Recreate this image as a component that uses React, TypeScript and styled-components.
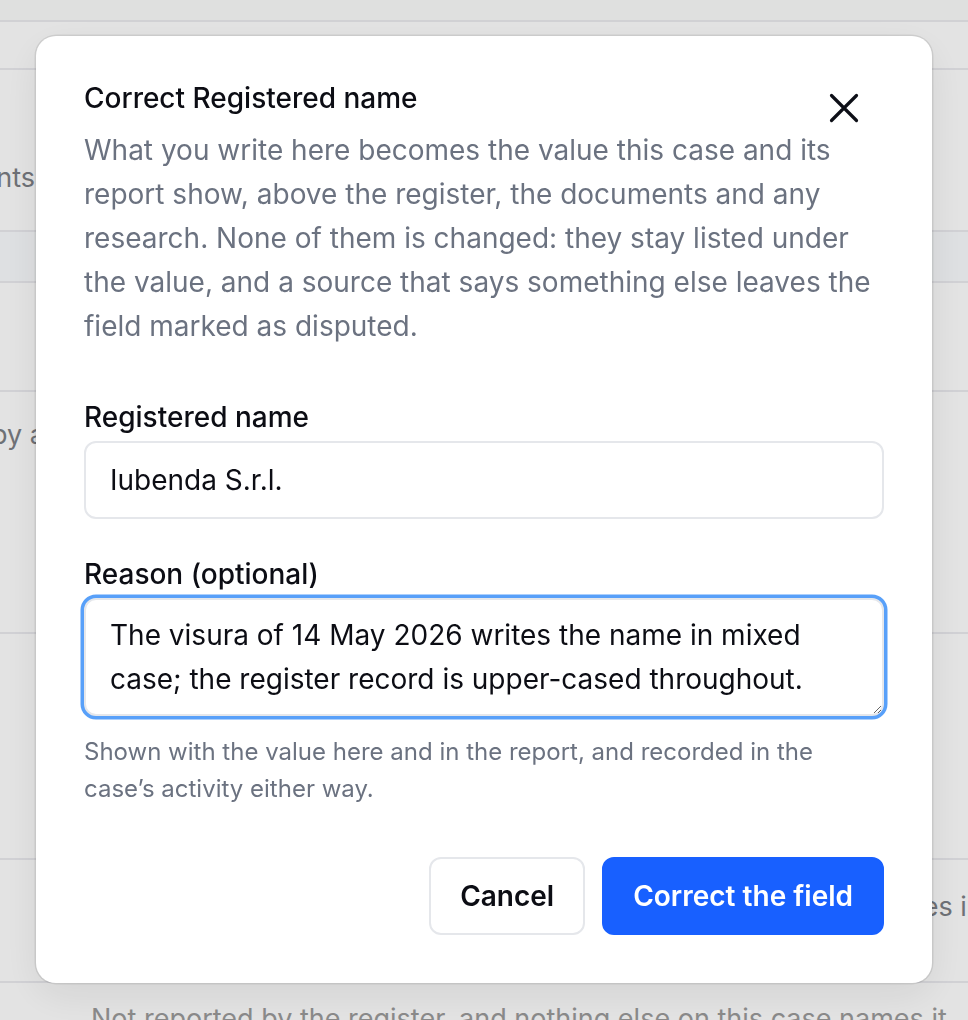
import React from "react";
import styled, { createGlobalStyle } from "styled-components";

const Global = createGlobalStyle`
  html, body { margin: 0; padding: 0; }
  body {
    font-family: Inter, "Noto Sans", "Liberation Sans", sans-serif;
    -webkit-font-smoothing: antialiased;
  }
  #root { height: 1020px; overflow: hidden; }
  * { box-sizing: border-box; }
`;

const Page = styled.div`
  height: 1020px;
  overflow: hidden;
  background: #fdfdfd;
  display: flex;
  flex-direction: column;
  font-size: 27px;
  line-height: 32px;
  color: #7b7e84;
`;

const TopBar = styled.div`
  height: 22px;
  flex: none;
  background: #f9faf9;
  border-bottom: 2px solid #e9e9ed;
`;

const Row = styled.div<{ $h: number; $band?: boolean; $pt?: number }>`
  height: ${(p) => p.$h}px;
  flex: none;
  display: flex;
  align-items: flex-start;
  justify-content: space-between;
  padding-top: ${(p) => p.$pt ?? 0}px;
  background: ${(p) => (p.$band ? "#f8fafc" : "transparent")};
  border-bottom: 2px solid #e9e9ed;
`;

const LeftCell = styled.div<{ $w: number; $end?: boolean }>`
  width: ${(p) => p.$w}px;
  overflow: hidden;
  white-space: nowrap;
  display: flex;
  justify-content: ${(p) => (p.$end ? "flex-end" : "flex-start")};
`;

const Spill = styled.span<{ $shift: number }>`
  flex: none;
  margin-left: ${(p) => p.$shift}px;
`;

const RightCell = styled.div`
  width: 100px;
  overflow: hidden;
  white-space: nowrap;
`;

const FootRow = styled.div`
  flex: none;
  padding: 14px 0 0 91px;
  white-space: nowrap;
  font-size: 27px;
  line-height: 44px;
  color: #9a9a9a;
`;

const Overlay = styled.div`
  position: fixed;
  inset: 0;
  background: rgba(0, 0, 0, 0.1);
  display: flex;
  justify-content: center;
  align-items: flex-start;
  padding-top: 36px;
`;

const Dialog = styled.div`
  position: relative;
  width: 896px;
  background: #ffffff;
  border-radius: 20px;
  padding: 48px;
  box-shadow: 0 0 0 1.5px rgba(0, 0, 0, 0.09), 0 12px 40px rgba(0, 0, 0, 0.08);
  display: flex;
  flex-direction: column;
`;

const CloseButton = styled.button`
  position: absolute;
  top: 56px;
  right: 72px;
  width: 32px;
  height: 32px;
  padding: 0;
  border: none;
  background: transparent;
  color: #0d0f17;
  display: flex;
  align-items: center;
  justify-content: center;
  cursor: pointer;
`;

const Title = styled.h2`
  margin: 0;
  font-size: 28px;
  line-height: 28px;
  font-weight: 500;
  color: #0c0d14;
`;

const Description = styled.p`
  margin: 16px 0 0;
  font-size: 28px;
  line-height: 44px;
  color: #6b7280;
  padding-right: 4px;
`;

const Form = styled.div`
  margin-top: 53px;
  display: flex;
  flex-direction: column;
  gap: 39px;
`;

const Field = styled.div`
  display: flex;
  flex-direction: column;
  gap: 8px;
`;

const Label = styled.label`
  font-size: 28px;
  line-height: 32px;
  font-weight: 500;
  color: #0c0d14;
`;

const TextInput = styled.input`
  height: 78px;
  width: 100%;
  border: 2px solid #e5e7eb;
  border-radius: 12px;
  padding: 0 24px;
  font-family: inherit;
  font-size: 28px;
  color: #0c0d14;
  background: #fff;
  outline: none;
`;

const TextArea = styled.textarea`
  width: 100%;
  height: 118px;
  border: 2px solid #e5e7eb;
  border-radius: 12px;
  padding: 13px 24px;
  font-family: inherit;
  font-size: 28px;
  line-height: 44px;
  color: #0c0d14;
  background: #fff;
  outline: none;
  resize: vertical;
  box-shadow: 0 0 0 3.5px #58a0f9;
  display: block;
`;

const Helper = styled.p`
  margin: 17px 0 0;
  font-size: 24px;
  line-height: 37px;
  color: #6b7280;
`;

const Actions = styled.div`
  margin-top: 50px;
  display: flex;
  justify-content: flex-end;
  gap: 17px;
`;

const Button = styled.button<{ $primary?: boolean }>`
  height: 78px;
  padding: 0 29px;
  border-radius: 12px;
  border: 2px solid ${(p) => (p.$primary ? "#1860ff" : "#e5e7eb")};
  background: ${(p) => (p.$primary ? "#1860ff" : "#ffffff")};
  color: ${(p) => (p.$primary ? "#ffffff" : "#0c0d14")};
  font-family: inherit;
  font-size: 28px;
  font-weight: 600;
  cursor: pointer;
`;

export default function App() {
  return (
    <>
      <Global />
      <Page>
        <TopBar />
        <Row $h={48} />
        <Row $h={162} $pt={92}>
          <LeftCell $w={35} $end>
            Documents
          </LeftCell>
        </Row>
        <Row $h={51} $band />
        <Row $h={109} />
        <Row $h={242} $pt={27}>
          <LeftCell $w={36}>
            <Spill $shift={-9}>by a register filing</Spill>
          </LeftCell>
        </Row>
        <Row $h={226} />
        <Row $h={123} $pt={31}>
          <span />
          <RightCell>names in the</RightCell>
        </Row>
        <FootRow>
          Not reported by the register, and nothing else on this case names it
        </FootRow>
      </Page>
      <Overlay>
        <Dialog role="dialog" aria-labelledby="dlg-title">
          <CloseButton aria-label="Close">
            <svg width="32" height="32" viewBox="0 0 32 32" fill="none">
              <path
                d="M3.5 3.5 28.5 28.5M28.5 3.5 3.5 28.5"
                stroke="currentColor"
                strokeWidth="3.2"
                strokeLinecap="round"
              />
            </svg>
          </CloseButton>
          <Title id="dlg-title">Correct Registered name</Title>
          <Description>
            What you write here becomes the value this case and its report
            show, above the register, the documents and any research. None of
            them is changed: they stay listed under the value, and a source
            that says something else leaves the field marked as disputed.
          </Description>
          <Form>
            <Field>
              <Label htmlFor="name">Registered name</Label>
              <TextInput id="name" defaultValue="Iubenda S.r.l." />
            </Field>
            <Field>
              <Label htmlFor="reason">Reason (optional)</Label>
              <div>
                <TextArea
                  id="reason"
                  defaultValue="The visura of 14 May 2026 writes the name in mixed case; the register record is upper-cased throughout."
                />
                <Helper>
                  Shown with the value here and in the report, and recorded in
                  the case’s activity either way.
                </Helper>
              </div>
            </Field>
          </Form>
          <Actions>
            <Button>Cancel</Button>
            <Button $primary>Correct the field</Button>
          </Actions>
        </Dialog>
      </Overlay>
    </>
  );
}
